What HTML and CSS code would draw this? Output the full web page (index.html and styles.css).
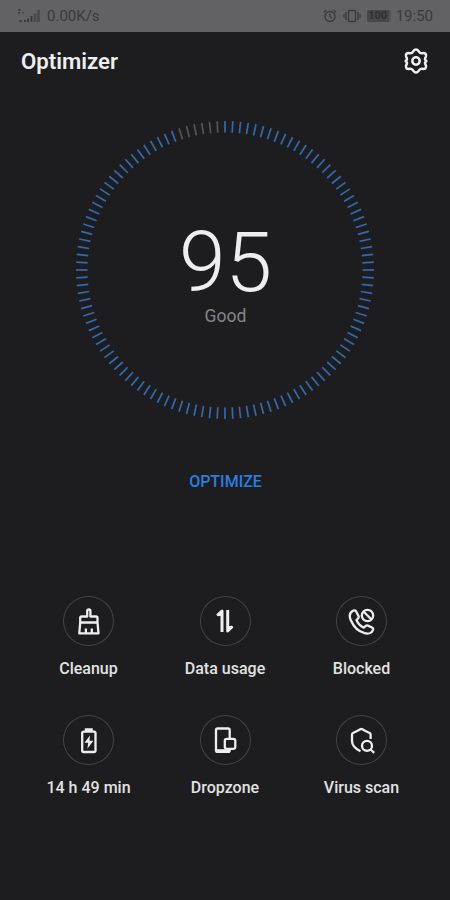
FILE: index.html
```
<!DOCTYPE html>
<html lang="en">
    <head>
        <meta charset="utf-8">
        <meta name="viewport" content="width=device-width, initial-scale=1">
        <title>Optimizer</title>
        <link rel="stylesheet" href="styles.css">
        <script>
            const TICKS = 120;
            const FREE = 6; // grey ticks just before the top

            window.onload = function()
            {
                let dial = document.querySelector(".ticks");
                for (let i = 0; i < TICKS; i++)
                {
                    let line = document.createElementNS("http://www.w3.org/2000/svg", "line");
                    line.setAttribute("x1", 150);
                    line.setAttribute("x2", 150);
                    line.setAttribute("y1", 1);
                    line.setAttribute("y2", 12.5);
                    line.setAttribute("transform", "rotate(" + i * 360 / TICKS + " 150 150)");
                    line.setAttribute("class", i >= TICKS - FREE ? "tick off" : "tick");
                    dial.appendChild(line);
                }
            };
        </script>
    </head>
    <body>
        <div class="status">
            <div class="status-left">
                <svg class="signal" width="24" height="16" viewBox="0 0 24 16">
                    <path class="faint" d="M1 2h3M1 5h2M5 4l2 1M2 13h3"/>
                    <path d="M8 12v2M11 10.5v3.500M14.500 8v6" />
                    <path class="wide" d="M18 5.500v8.500M21.500 2v12"/>
                </svg>
                <span>0.00K/s</span>
            </div>
            <div class="status-right">
                <svg width="14" height="14" viewBox="0 0 14 14">
                    <circle cx="7" cy="7.500" r="5"/>
                    <path d="M7 4.500v3.200l2 1.300M.8 3.400L3.400 1M13.200 3.400L10.600 1"/>
                </svg>
                <svg width="18" height="14" viewBox="0 0 18 14">
                    <rect x="5.500" y="1.500" width="7" height="11" rx="1"/>
                    <path d="M3 3v8M15 3v8M1 5v4M17 5v4"/>
                </svg>
                <div class="battery"><span>100</span></div>
                <span class="clock">19:50</span>
            </div>
        </div>

        <header class="header">
            <h1>Optimizer</h1>
            <svg class="gear" width="26" height="28" viewBox="0 0 26 28">
                <path d="M10.300 4.300Q13 .8 15.700 4.300Q17 6.500 19.300 6.200Q24 5.600 22.900 9.600Q21.300 12 22.700 13.200Q24 14 22.700 14.800Q21.300 16 22.900 18.400Q24 22.400 19.300 21.800Q17 21.500 15.700 23.700Q13 27.200 10.300 23.700Q9 21.500 6.700 21.800Q2 22.400 3.100 18.400Q4.700 16 3.300 14.800Q2 14 3.300 13.200Q4.700 12 3.100 9.600Q2 5.600 6.700 6.200Q9 6.500 10.300 4.300Z"/>
                <circle cx="13" cy="14" r="3.700"/>
            </svg>
        </header>

        <main class="main">
            <div class="dial">
                <svg class="ticks" width="300" height="300" viewBox="0 0 300 300"></svg>
                <div class="score">
                    <div class="number">95</div>
                    <div class="state">Good</div>
                </div>
            </div>
            <button class="optimize">OPTIMIZE</button>
        </main>

        <div class="tools">
            <div class="tool">
                <div class="circle">
                    <svg width="28" height="28" viewBox="0 0 28 28">
                        <path d="M12.200 9.500V4q0-1.500 1.600-1.500t1.600 1.500v5.500h5.600q1.500 0 1.500 1.500V15.500H5.200V11q0-1.500 1.500-1.500zM5.200 15.500L4.300 26.300h19.200L22.500 15.500M10.900 26v-4.500M16.800 26v-4.500"/>
                    </svg>
                </div>
                <span>Cleanup</span>
            </div>
            <div class="tool">
                <div class="circle">
                    <svg width="28" height="28" viewBox="0 0 28 28">
                        <path class="thick" d="M11 25V4L6.200 8.500M16.700 3v21l4.600-4.500"/>
                        <path class="fill" d="M11 3v6H5.700zM16.700 25v-6h5.500z"/>
                    </svg>
                </div>
                <span>Data usage</span>
            </div>
            <div class="tool">
                <div class="circle">
                    <svg width="28" height="28" viewBox="0 0 28 28">
                        <path d="M4.500 4C1.500 6 1 9 2.700 13C5.500 19.500 10.500 24.500 16.500 26.200C20.500 27.300 24 25.800 25 22.800C25.300 21.800 25 21 24 20.500L20 18.600C19 18.200 18.300 18.500 17.500 19.200L15.800 20.700C12.600 19.200 9.800 16.300 8.500 13L10 11.500C10.800 10.700 10.900 10 10.500 9L8.300 4.700C7.500 3.100 6 3 4.500 4Z"/>
                        <circle cx="19.500" cy="8.500" r="5.700"/>
                        <path d="M15.500 4.500l8 8"/>
                    </svg>
                </div>
                <span>Blocked</span>
            </div>
            <div class="tool">
                <div class="circle">
                    <svg width="28" height="28" viewBox="0 0 28 28">
                        <rect x="7.200" y="5.700" width="13.300" height="20.300" rx="1.500"/>
                        <path class="fill" d="M9.800 2.200h8v3.500h-8zM14.900 9.500l-5.400 7.200h3.700l-.8 6 6-8h-3.900z"/>
                    </svg>
                </div>
                <span>14 h 49 min</span>
            </div>
            <div class="tool">
                <div class="circle">
                    <svg width="28" height="28" viewBox="0 0 28 28">
                        <path d="M18.700 12V4.200q0-1.700-1.700-1.700H6.700Q5 2.500 5 4.200v20q0 1.700 1.700 1.700H17q1.700 0 1.700-1.700v-1"/>
                        <path class="thick" d="M6 24.700h12"/>
                        <rect x="13.800" y="12.800" width="10.500" height="10" rx="2"/>
                    </svg>
                </div>
                <span>Dropzone</span>
            </div>
            <div class="tool">
                <div class="circle">
                    <svg width="28" height="28" viewBox="0 0 28 28">
                        <path d="M22.600 13V8.500q0-1-1-1.500Q17 5 14.300 3.300q-1-.6-2 0Q9.500 5 5 7q-1 .5-1 1.500V15q0 6 8.500 10.300"/>
                        <circle cx="19" cy="19.800" r="5"/>
                        <path d="M22.700 23.500l3.500 3.300"/>
                    </svg>
                </div>
                <span>Virus scan</span>
            </div>
        </div>
    </body>
</html>
```
FILE: styles.css
```
*{
    box-sizing: border-box;
    margin: 0;
    padding: 0;
}
body{
    height: 900px;
    background-color: #1d1d1f;
    color: #eee;
    font-family: Roboto, sans-serif;
    overflow: hidden;
}
svg{
    display: block;
    fill: none;
    stroke-linejoin: round;
}

.status{
    display: flex;
    justify-content: space-between;
    height: 32px;
    padding: 0 17px;
    background-color: #626265;
    color: #39393b;
    font-size: 15px;
    line-height: 32px;
}
.status svg{
    stroke: #39393b;
    stroke-width: 1.3;
}
.status .signal{
    stroke-width: 1.8;
}
.status .faint{
    stroke-width: 1.3;
}
.status .wide{
    stroke: #48484a;
    stroke-width: 2.6;
}
.status-left, .status-right{
    display: flex;
    align-items: center;
    gap: 6px;
}
.battery{
    display: flex;
    align-items: center;
    justify-content: center;
    width: 24px;
    height: 12px;
    border-radius: 2px;
    border-right: 2px solid #555558;
    background-color: #47474a;
    color: #303032;
    font-size: 11px;
    font-weight: 700;
}
.clock{
    margin-left: -1px;
}

.header{
    display: flex;
    align-items: center;
    justify-content: space-between;
    height: 58px;
    padding: 0 21px;
}
.header h1{
    font-size: 22.200px;
    font-weight: 600;
}
.gear{
    stroke: #f0f0f0;
    stroke-width: 2.500;
}

.main{
    display: flex;
    flex-direction: column;
    align-items: center;
    height: 506px;
    padding-top: 30px;
}
.dial{
    display: grid;
    width: 300px;
    height: 300px;
}
.ticks, .score{
    grid-area: 1 / 1;
}
.tick{
    stroke: #3269b0;
    stroke-width: 1.700;
}
.off{
    stroke: #555557;
}
.score{
    padding-top: 103px;
    padding-left: 1px;
    text-align: center;
}
.number{
    font-size: 84px;
    font-weight: 300;
    line-height: 80px;
}
.state{
    margin-top: 2px;
    color: #858587;
    font-size: 17.500px;
    line-height: 22px;
}
.optimize{
    margin-top: 51px;
    padding-left: 1px;
    border: none;
    background: none;
    color: #2b7de0;
    font-family: inherit;
    font-size: 16px;
    font-weight: 500;
    line-height: 22px;
}

.tools{
    display: grid;
    grid-template-columns: 136.500px 136.500px 136.500px;
    justify-content: center;
    row-gap: 36px;
}
.tool{
    display: flex;
    flex-direction: column;
    align-items: center;
    gap: 13px;
    height: 83px;
    font-size: 16px;
    font-weight: 500;
    line-height: 20px;
    color: #e2e2e2;
}
.circle{
    display: flex;
    align-items: center;
    justify-content: center;
    width: 51px;
    height: 51px;
    border: 1.500px solid #454547;
    border-radius: 50%;
}
.circle svg{
    stroke: #eee;
    stroke-width: 2.300;
}
.circle .thick{
    stroke-width: 3;
}
.circle .fill{
    fill: #eee;
    stroke: none;
}
```
